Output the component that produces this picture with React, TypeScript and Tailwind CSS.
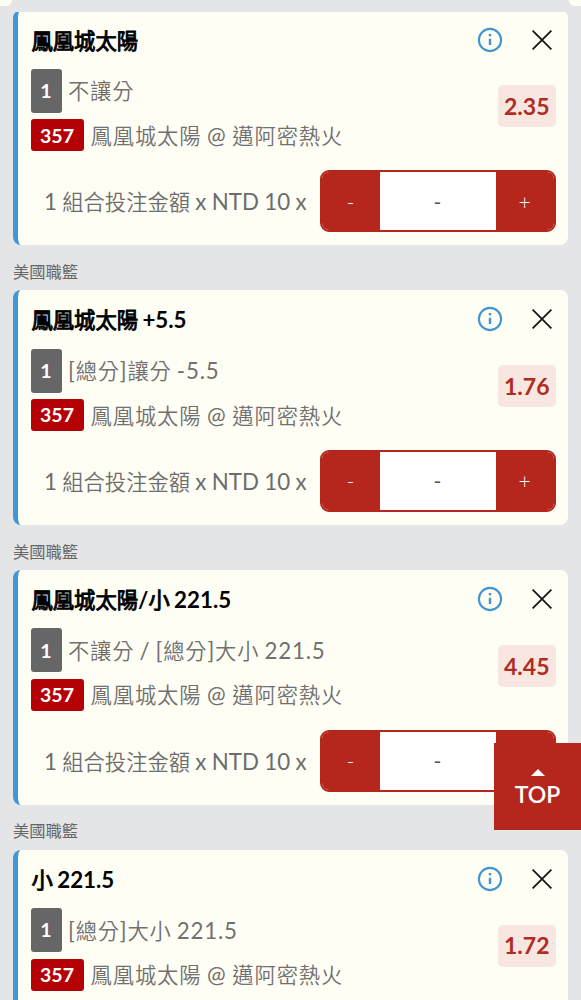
import clsx from 'clsx';

interface Bet {
  id: number;
  pick: string;
  market: string;
  odds: string;
  stake: boolean;
}

const bets: Bet[] = [
  { id: 1, pick: '鳳凰城太陽', market: '不讓分', odds: '2.35', stake: true },
  { id: 2, pick: '鳳凰城太陽 +5.5', market: '[總分]讓分 -5.5', odds: '1.76', stake: true },
  { id: 3, pick: '鳳凰城太陽/小 221.5', market: '不讓分 / [總分]大小 221.5', odds: '4.45', stake: true },
  { id: 4, pick: '小 221.5', market: '[總分]大小 221.5', odds: '1.72', stake: false },
];

// Chinese runs are set slightly smaller and in their own weight
const Mixed = ({ text, cjk, className }: { text: string; cjk: string; className?: string }) => (
  <span className={clsx('text-[22.3px] leading-8 whitespace-pre', className)}>
    {text.split(/([\u4e00-\u9fff]+)/).map((part, i) =>
      i % 2 ? (
        <span key={i} className={clsx('text-[21.3px]', cjk)}>
          {part}
        </span>
      ) : (
        part
      )
    )}
  </span>
);

const InfoIcon = () => (
  <svg width="26" height="26" viewBox="0 0 26 26" fill="none">
    <circle cx="13" cy="13" r="11.1" stroke="#3f94d1" strokeWidth="2.1" />
    <path d="M13 11.7v6.3" stroke="#3f94d1" strokeWidth="2.4" />
    <path d="M13 7v2.2" stroke="#3f94d1" strokeWidth="2.4" />
  </svg>
);

const CloseIcon = () => (
  <svg width="20" height="20" viewBox="0 0 20 20" fill="none">
    <path d="M0.6 0.6l18.8 18.8M19.4 0.6L0.6 19.4" stroke="#151515" strokeWidth="1.8" />
  </svg>
);

const Stepper = () => (
  <div className="flex h-[62px] w-[236px] shrink-0 overflow-hidden rounded-[9px] border-2 border-[#b5271d] bg-white text-[21px]">
    <button className="w-[58px] bg-[#b5271d] font-light text-white">-</button>
    <div className="flex flex-1 items-center justify-center text-[#555]">-</div>
    <button className="w-[58px] bg-[#b5271d] font-light text-white">+</button>
  </div>
);

const BetCard = ({ bet, first }: { bet: Bet; first: boolean }) => (
  <article
    className={clsx(
      'flex h-[234.75px] flex-col rounded-[8px] border-l-[5px] border-[#4296d2] bg-[#fffef5] pl-[12.5px] pr-[12.5px]',
      first && '-mt-[2px]'
    )}
  >
    <header className="flex h-[58.5px] items-center justify-between pl-px">
      <h3 className="pt-[2px] font-bold text-black">
        <Mixed
          text={bet.pick}
          cjk="font-normal [-webkit-text-stroke:0.9px_#000]"
          className="[word-spacing:-1px]"
        />
      </h3>
      <div className="flex items-center gap-[29px] pr-1">
        <InfoIcon />
        <CloseIcon />
      </div>
    </header>

    <div className="flex items-start justify-between">
      <div className="flex flex-col gap-[6.5px]">
        <div className="flex items-center gap-[6.5px]">
          <span className="flex h-[44px] w-[31px] items-center justify-center rounded-[3px] bg-[#666] text-[19.5px] font-bold text-white">
            1
          </span>
          <Mixed text={bet.market} cjk="font-[350]" className="pt-px tracking-[0.8px] text-[#707070] [word-spacing:-1.3px]" />
        </div>
        <div className="flex items-center gap-[7px]">
          <span className="flex h-[32px] w-[53px] items-center justify-center rounded-[3px] bg-[#b50005] text-[19.5px] font-bold text-white">
            357
          </span>
          <Mixed
            text="鳳凰城太陽 @ 邁阿密熱火"
            cjk="font-[350]"
            className="-mb-px tracking-[0.9px] text-[#707070] [word-spacing:-1px]"
          />
        </div>
      </div>
      <div className="mt-[16.5px] flex h-[42px] w-[57.5px] items-center justify-center rounded-[5px] bg-[#f8e7e0] text-[23px] font-bold text-[#b02b22]">
        {bet.odds}
      </div>
    </div>

    {bet.stake && (
      <div className="mt-[19px] flex items-center justify-end gap-[13px]">
        <Mixed
          text="1 組合投注金額 x NTD 10 x"
          cjk="font-[350]"
          className="pt-[2px] text-[#6c6c6c] [word-spacing:-0.4px]"
        />
        <Stepper />
      </div>
    )}
  </article>
);

const App = () => {
  return (
    <div className="relative h-[1000px] overflow-hidden bg-[#e4e5e7] font-[Lato,'Noto_Sans_CJK_TC',sans-serif]">
      {/* Bottom corners of the panel above the list */}
      <span className="absolute top-0 left-0 h-[6px] w-[12px] rounded-br-full bg-[#fffef5]" />
      <span className="absolute top-0 right-0 h-[6px] w-[12px] rounded-bl-full bg-[#fffef5]" />

      <main className="flex flex-col px-[13px] pt-[12.25px]">
        {bets.map((bet, i) => (
          <section key={bet.id} className="shrink-0">
            {i > 0 && (
              <p className="flex h-[45px] items-center pt-[9px] text-[16.3px] text-[#666]">美國職籃</p>
            )}
            <div className="overflow-hidden rounded-t-[2px]">
              <BetCard bet={bet} first={i === 0} />
            </div>
          </section>
        ))}
      </main>

      {/* Back to top */}
      <button className="absolute top-[743px] right-0 flex h-[87px] w-[87px] flex-col items-center bg-[#b5271d] pt-[26px] text-white">
        <svg width="14" height="7" viewBox="0 0 14 7" fill="currentColor">
          <path d="M7 0L14 7H0z" />
        </svg>
        <span className="mt-[4px] text-[23px] leading-[28px] font-semibold">TOP</span>
      </button>
    </div>
  );
};

export default App;
